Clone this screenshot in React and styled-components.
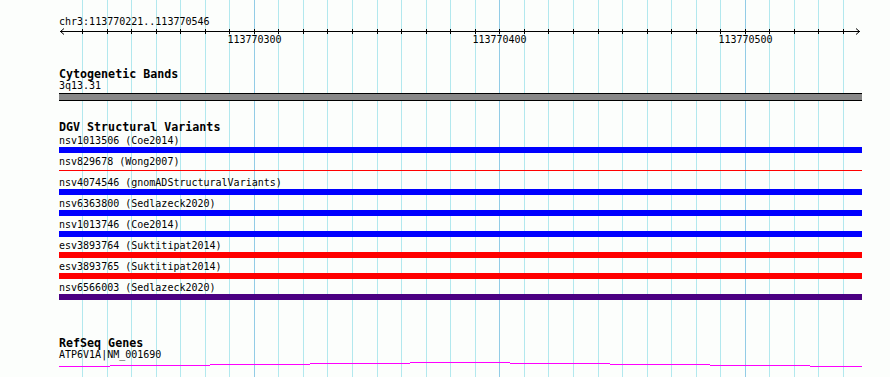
import React from "react";
import styled, { createGlobalStyle } from "styled-components";

const GlobalStyle = createGlobalStyle`
  html, body {
    margin: 0;
    padding: 0;
    background: #fcfefc;
  }
`;

const mono = `"DejaVu Sans Mono", "Liberation Mono", monospace`;

// 113770230 sits at x=82, 113770540 at x=843
const START = 113770221;
const END = 113770546;
const toX = (bp) => 82 + (bp - 113770230) * (761 / 310);

const gridStops = [];
for (let bp = 113770230; bp <= 113770540; bp += 10) gridStops.push(bp);

const variants = [
  { name: "nsv1013506", source: "Coe2014", color: "#0000ff" },
  { name: "nsv829678", source: "Wong2007", color: "#ff0000", thin: true },
  { name: "nsv4074546", source: "gnomADStructuralVariants", color: "#0000ff" },
  { name: "nsv6363800", source: "Sedlazeck2020", color: "#0000ff" },
  { name: "nsv1013746", source: "Coe2014", color: "#0000ff" },
  { name: "esv3893764", source: "Suktitipat2014", color: "#ff0000" },
  { name: "esv3893765", source: "Suktitipat2014", color: "#ff0000" },
  { name: "nsv6566003", source: "Sedlazeck2020", color: "#4b0082" },
];

// stepped intron line of the gene model
const geneSteps = [
  [59, 110, 5],
  [110, 210, 4],
  [210, 310, 3],
  [310, 410, 2],
  [410, 510, 1],
  [510, 610, 2],
  [610, 710, 3],
  [710, 810, 4],
  [810, 862, 5],
];

const Page = styled.div`
  position: relative;
  width: 890px;
  height: 377px;
  overflow: hidden;
  background: #fcfefc;
  color: #000;
`;

const GridLayer = styled.svg`
  position: absolute;
  top: 0;
  left: 0;
  z-index: 0;
`;

const Stack = styled.div`
  position: relative;
  z-index: 1;
  display: flex;
  flex-direction: column;
`;

const Locus = styled.div`
  margin-top: 16px;
  padding-left: 59px;
  font: 10px/12px ${mono};
`;

const RulerSvg = styled.svg`
  display: block;
  width: 890px;
  height: 18px;
`;

const TrackTitle = styled.div`
  margin-top: ${({ $gap }) => $gap}px;
  padding-left: 59px;
  font: bold 11.67px/12px ${mono};
  white-space: nowrap;
`;

const FeatureLabel = styled.div`
  padding-left: 59px;
  font: 10px/12px ${mono};
  white-space: nowrap;
`;

const BandBar = styled.div`
  margin: 1px 0 0 59px;
  width: 803px;
  height: 6px;
  background: #888888;
  border-top: 1px solid #000;
  border-bottom: 1px solid #000;
`;

const VariantList = styled.div`
  margin-top: 2px;
  display: flex;
  flex-direction: column;
  gap: 3px;
`;

const VariantRow = styled.div`
  display: flex;
  flex-direction: column;
`;

const VariantBar = styled.div`
  margin-left: 59px;
  width: 803px;
  height: 6px;
  display: flex;
  align-items: flex-start;
  &::before {
    content: "";
    display: block;
    width: 100%;
    margin-top: ${({ $thin }) => ($thin ? "2px" : "0")};
    height: ${({ $thin }) => ($thin ? "1px" : "6px")};
    background: ${({ $color }) => $color};
  }
`;

const GeneSvg = styled.svg`
  display: block;
  width: 890px;
  height: 8px;
`;

function Grid() {
  return (
    <GridLayer width="890" height="377" shapeRendering="crispEdges">
      {gridStops.map((bp) => {
        const x = Math.round(toX(bp)) + 0.5;
        const major = bp % 100 === 0;
        return (
          <line
            key={bp}
            x1={x}
            x2={x}
            y1="0"
            y2="377"
            stroke={major ? "#92cce6" : "#b2e8ee"}
            strokeWidth="1"
          />
        );
      })}
    </GridLayer>
  );
}

function Ruler() {
  return (
    <RulerSvg viewBox="0 0 890 18">
      <g stroke="#000" strokeWidth="1" shapeRendering="crispEdges" fill="none">
        <line x1="60" x2="860" y1="3.5" y2="3.5" />
        {gridStops.map((bp) => {
          const x = Math.round(toX(bp)) + 0.5;
          return <line key={bp} x1={x} x2={x} y1="1" y2="6" />;
        })}
      </g>
      <g stroke="#000" strokeWidth="1" fill="none">
        <polyline points="64,0.5 60.5,3.5 64,6.5" />
        <polyline points="856,0.5 859.5,3.5 856,6.5" />
      </g>
      {[113770300, 113770400, 113770500].map((bp) => (
        <text
          key={bp}
          x={Math.round(toX(bp)) + 0.5}
          y="15"
          textAnchor="middle"
          fontFamily={mono}
          fontSize="10"
          fill="#000"
        >
          {bp}
        </text>
      ))}
    </RulerSvg>
  );
}

function GeneModel() {
  return (
    <GeneSvg viewBox="0 0 890 8" shapeRendering="crispEdges">
      {geneSteps.map(([x1, x2, y]) => (
        <line
          key={x1}
          x1={x1}
          x2={x2}
          y1={y + 0.5}
          y2={y + 0.5}
          stroke="#ff00ff"
          strokeWidth="1"
        />
      ))}
    </GeneSvg>
  );
}

export default function App() {
  return (
    <>
      <GlobalStyle />
      <Page>
        <Grid />
        <Stack>
          <Locus>
            chr3:{START}..{END}
          </Locus>
          <Ruler />

          <TrackTitle $gap={22}>Cytogenetic Bands</TrackTitle>
          <FeatureLabel>3q13.31</FeatureLabel>
          <BandBar />

          <TrackTitle $gap={20}>DGV Structural Variants</TrackTitle>
          <VariantList>
            {variants.map((v) => (
              <VariantRow key={v.name}>
                <FeatureLabel>
                  {v.name} ({v.source})
                </FeatureLabel>
                <VariantBar $color={v.color} $thin={v.thin} />
              </VariantRow>
            ))}
          </VariantList>

          <TrackTitle $gap={37}>RefSeq Genes</TrackTitle>
          <FeatureLabel>ATP6V1A|NM_001690</FeatureLabel>
          <GeneModel />
        </Stack>
      </Page>
    </>
  );
}
